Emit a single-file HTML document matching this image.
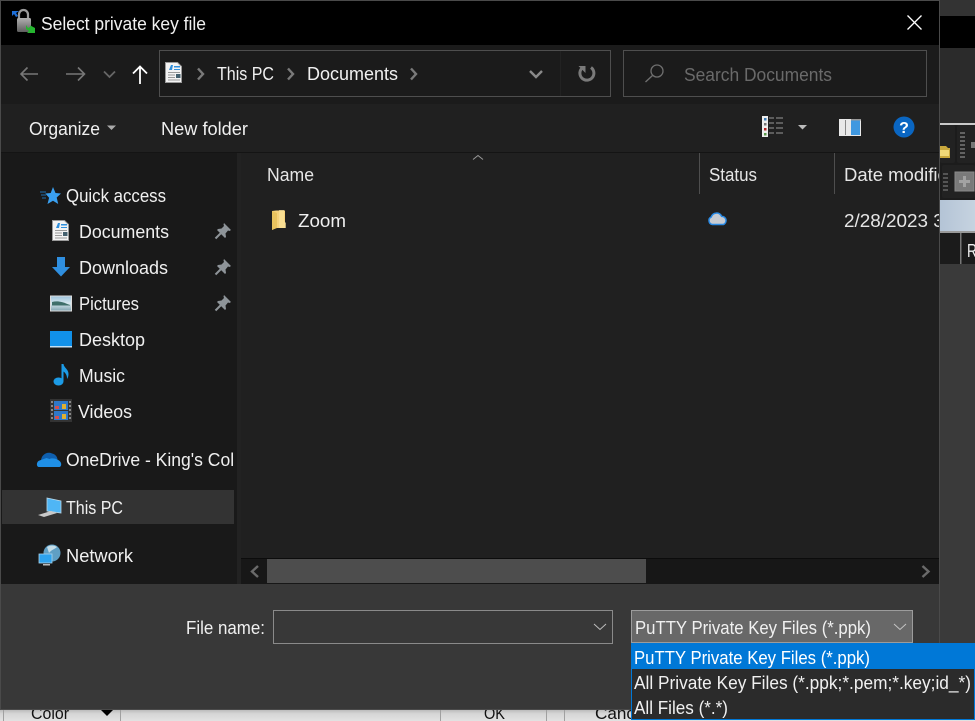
<!DOCTYPE html>
<html><head><meta charset="utf-8"><style>
html,body{margin:0;padding:0;background:#2b2b2b;width:975px;height:721px;overflow:hidden}
svg{display:block}
text{font-family:"Liberation Sans",sans-serif;font-size:18px;fill:#f0f0f0}
.d{fill:#e6e6e6}
</style></head><body>
<svg width="975" height="721" viewBox="0 0 975 721" xmlns="http://www.w3.org/2000/svg">
<defs>
<linearGradient id="bot" x1="0" y1="0" x2="0" y2="1"><stop offset="0" stop-color="#b5b5b5"/><stop offset=".4" stop-color="#d6d6d6"/><stop offset="1" stop-color="#e2e2e2"/></linearGradient>
<linearGradient id="blu" x1="0" y1="0" x2="1" y2="0"><stop offset="0" stop-color="#b4c4d6"/><stop offset="1" stop-color="#c6d3e0"/></linearGradient>
<linearGradient id="lock" x1="0" y1="0" x2="0" y2="1"><stop offset="0" stop-color="#b0b0b0"/><stop offset="1" stop-color="#5e5e5e"/></linearGradient>
<linearGradient id="sky" x1="0" y1="0" x2="0" y2="1"><stop offset="0" stop-color="#9cc2dc"/><stop offset=".5" stop-color="#d8e8ee"/><stop offset="1" stop-color="#7fa3b0"/></linearGradient>
<g id="pin"><path d="M1-8L8-1 6.500 0 5-.5 2.500 2.500 3 6 2 7-6-1-5-2-1.500-2.500 1-5 .5-6.500Z" fill="#8e9499"/><path d="M-2 2L-7.500 7.500" stroke="#8e9499" stroke-width="2"/></g>
<g id="doc"><path d="M0.500 .5H12.500L16.500 4.500V20.500H.5Z" fill="#f3f3f3" stroke="#9a9a9a"/><path d="M6 3l-2 5h3l1-5zM9 4h6v1.500H9zM9 7h6v1H9z" fill="#2f8fdc"/><path d="M3 10h12v1H3zM3 12.500h7v1H3zM3 15h7v1H3zM3 17.500h12v1H3z" fill="#9a9a9a"/><rect x="11" y="12" width="4.500" height="4" fill="#44606e"/></g>
</defs>

<!-- backdrop -->
<rect width="975" height="721" fill="#2b2b2b"/>
<rect x="940" y="16" width="35" height="32" fill="#000"/>
<rect x="940" y="0" width="35" height="16" fill="#333"/>
<rect x="940" y="123" width="35" height="2" fill="#c9c9c9"/>
<rect x="940" y="125" width="35" height="75" fill="#1c1c1c"/>
<rect x="940" y="125" width="15" height="38" rx="2" fill="#222"/>
<rect x="957" y="125" width="18" height="38" rx="2" fill="#222"/>
<rect x="942" y="165" width="33" height="33" rx="2" fill="#222"/>
<path d="M940 146h6l2 2h2v10h-10z" fill="#c9a83d"/><rect x="940" y="150" width="9" height="6" fill="#f0d878"/>
<path d="M960 133h5M960 137h5M960 141h5M960 145h5M960 149h5M960 153h5M960 157h5" stroke="#777" stroke-width="1.500"/>
<rect x="971" y="142" width="4" height="6" fill="#777"/>
<path d="M943 174h5M943 178h5M943 182h5M943 186h5M943 190h5" stroke="#666" stroke-width="1.500"/>
<rect x="955" y="172" width="19" height="19" fill="#7a7a7a" stroke="#8a8a8a"/>
<path d="M959 181.500h11M964.500 176v11" stroke="#a2a2a2" stroke-width="3"/>
<rect x="940" y="200" width="35" height="32" fill="url(#blu)"/>
<rect x="940" y="231" width="35" height="2" fill="#9a9a9a"/>
<rect x="940" y="233" width="35" height="31" fill="#1b1b1b"/>
<rect x="960" y="233" width="1.500" height="31" fill="#777"/>
<text x="967" y="257" textLength="10" lengthAdjust="spacingAndGlyphs">R</text>
<rect x="940" y="264" width="35" height="460" fill="#3a3a3a"/>

<!-- bottom strip behind dialog -->
<rect x="0" y="709" width="975" height="12" fill="url(#bot)"/>
<path d="M3.500 709v12M120.500 709v12M440.500 709v12M546.500 709v12M564.500 709v12" stroke="#a0a0a0" fill="none"/>
<text x="31" y="719" textLength="38" lengthAdjust="spacingAndGlyphs" style="fill:#111;font-size:17px">Color</text>
<path d="M101 710h12l-6 6z" fill="#000"/>
<text x="484" y="719" textLength="21" lengthAdjust="spacingAndGlyphs" style="fill:#111;font-size:17px">OK</text>
<text x="595" y="719" textLength="40" lengthAdjust="spacingAndGlyphs" style="fill:#111;font-size:17px">Canc</text>

<!-- dialog -->
<rect x="0" y="0" width="940" height="710" fill="#4a4a4a"/>
<rect x="1" y="1" width="938" height="44" fill="#000"/>
<rect x="1" y="45" width="938" height="59" fill="#1b1b1b"/>
<rect x="1" y="104" width="938" height="48" fill="#202020"/>
<rect x="1" y="152" width="938" height="1" fill="#141414"/>
<rect x="1" y="153" width="236" height="431" fill="#191919"/>
<rect x="237" y="153" width="4" height="431" fill="#222"/>
<rect x="241" y="153" width="698" height="431" fill="#202020"/>
<rect x="1" y="584" width="938" height="125" fill="#383838"/>

<!-- title bar -->
<path d="M19 18v-3.500a4.500 4.500 0 0 1 9 0V18" fill="none" stroke="#9a9a9a" stroke-width="2.200"/>
<rect x="17" y="18" width="14" height="14" rx="1.500" fill="url(#lock)"/>
<path d="M12 11h7l-3 2 2 3-2 1-2-3-2 2z" fill="#1e6fd8"/>
<path d="M26 25l2 3 2-1 .5-1.500L35 28v5h-8l2-2-3-2z" fill="#25b52f"/>
<text x="41" y="30" textLength="165" lengthAdjust="spacingAndGlyphs">Select private key file</text>
<path d="M907.500 15.500l14 14M921.500 15.500l-14 14" stroke="#fff" stroke-width="1.300"/>

<!-- nav -->
<path d="M21 74h17M27.500 67.500L21 74l6.500 6.500" fill="none" stroke="#777" stroke-width="1.600"/>
<path d="M66 74h18M78 67.500L84.500 74 78 80.500" fill="none" stroke="#777" stroke-width="1.600"/>
<path d="M104 71.500l5.500 5.500 5.500-5.500" fill="none" stroke="#666" stroke-width="1.800"/>
<path d="M140 84V67M133 73.500l7-7 7 7" fill="none" stroke="#fff" stroke-width="1.800"/>
<rect x="159.500" y="50.500" width="451" height="46" fill="none" stroke="#4e4e4e"/>
<use href="#doc" transform="translate(165,62)"/>
<path d="M198 68.500l5 5.500-5 5.500" fill="none" stroke="#7a7a7a" stroke-width="2.400"/>
<text x="217" y="80" textLength="57" lengthAdjust="spacingAndGlyphs">This PC</text>
<path d="M288 68.500l5 5.500-5 5.500" fill="none" stroke="#7a7a7a" stroke-width="2.400"/>
<text x="307" y="80" textLength="91" lengthAdjust="spacingAndGlyphs">Documents</text>
<path d="M411 68.500l5 5.500-5 5.500" fill="none" stroke="#7a7a7a" stroke-width="2.400"/>
<path d="M530 71l6 6 6-6" fill="none" stroke="#8a8a8a" stroke-width="2.400"/>
<rect x="560" y="51" width="1" height="45" fill="#222"/>
<path d="M591 67.500a7 7 0 1 1-9.500 1.200" fill="none" stroke="#7a7a7a" stroke-width="3"/>
<path d="M578.500 66h7v7z" fill="#7a7a7a"/>
<rect x="623.500" y="50.500" width="303" height="46" fill="none" stroke="#4e4e4e"/>
<circle cx="657" cy="71" r="6" fill="none" stroke="#6f6f6f" stroke-width="1.300"/>
<path d="M652.500 75.500l-7 6.500" stroke="#6f6f6f" stroke-width="1.400"/>
<text x="684" y="81" textLength="148" lengthAdjust="spacingAndGlyphs" style="fill:#6a6a6a">Search Documents</text>

<!-- toolbar -->
<text x="29" y="135" textLength="71" lengthAdjust="spacingAndGlyphs">Organize</text>
<path d="M107 125.500h9l-4.500 4.500z" fill="#aaa"/>
<text x="161" y="135" textLength="87" lengthAdjust="spacingAndGlyphs">New folder</text>
<rect x="762" y="116" width="6" height="21" fill="#eee"/>
<rect x="764" y="118" width="2.500" height="2.500" fill="#3a7ab5"/><rect x="764" y="123" width="2.500" height="2.500" fill="#777"/><rect x="764" y="128" width="2.500" height="2.500" fill="#b02020"/><rect x="764" y="133" width="2.500" height="2.500" fill="#5a9a4a"/>
<path d="M769 118h5M776 118h7M769 123h5M776 123h7M769 128h5M776 128h7M769 133h5M776 133h7" stroke="#999"/>
<path d="M798 125h9l-4.500 4.500z" fill="#bbb"/>
<rect x="839" y="119" width="22" height="17" fill="#e8e8e8"/>
<rect x="845" y="120" width="1" height="15" fill="#888"/><rect x="851" y="120" width="9" height="15" fill="#3f98e0"/><rect x="851" y="119" width="10" height="1.500" fill="#999"/>
<circle cx="904" cy="127" r="10.500" fill="#0a66c2"/>
<text x="904" y="133" text-anchor="middle" style="font-size:16px;font-weight:bold;fill:#fff">?</text>

<!-- list header -->
<path d="M473 159.500l5-4 5 4" fill="none" stroke="#9a9a9a"/>
<text x="267" y="181" textLength="47" lengthAdjust="spacingAndGlyphs" class="d">Name</text>
<rect x="699" y="153" width="1" height="41" fill="#4e4e4e"/>
<rect x="834" y="153" width="1" height="41" fill="#4e4e4e"/>
<text x="709" y="181" textLength="48" lengthAdjust="spacingAndGlyphs" class="d">Status</text>
<svg x="844" y="150" width="95" height="100"><text x="0" y="31" textLength="114" lengthAdjust="spacingAndGlyphs" class="d">Date modified</text><text x="0" y="77" textLength="105" lengthAdjust="spacingAndGlyphs" class="d">2/28/2023 3:</text></svg>

<!-- row -->
<path d="M272 211l4-.5h9v17.500h-9l-4 2z" fill="#f6d27a"/>
<path d="M272 211l5 2v15l-5 2z" fill="#e9c35e"/>
<path d="M279 210h5v11l2 2v5h-7z" fill="#fbe29b" opacity=".7"/>
<text x="298" y="227" textLength="48" lengthAdjust="spacingAndGlyphs">Zoom</text>
<path d="M712.500 224.500a4 4 0 0 1-1.200-7.600 5.500 5.500 0 0 1 10.300-.5 4.200 4.200 0 0 1 1.800 8.100z" fill="#c8ccd2" stroke="#2a8be6" stroke-width="1.500"/>

<!-- sidebar -->
<path d="M53 187l2.500 6 5.500.5-4.300 4 1.500 6.500-5.200-3.200-5.500 3.200 1.600-6.300-3.800-4.200 5.400-.5z" fill="#3aa0f0"/>
<path d="M40 192h6M41 195h5M42 198h4" stroke="#1f6fb0" stroke-width="1"/>
<text x="66" y="202" textLength="100" lengthAdjust="spacingAndGlyphs">Quick access</text>
<use href="#doc" transform="translate(52,220)"/>
<text x="79" y="238" textLength="90" lengthAdjust="spacingAndGlyphs">Documents</text>
<use href="#pin" transform="translate(223,231)"/>
<path d="M57 257h8v10h5l-9 9.500-9-9.500h5z" fill="#2f8fe0"/>
<text x="79" y="274" textLength="89" lengthAdjust="spacingAndGlyphs">Downloads</text>
<use href="#pin" transform="translate(223,267)"/>
<rect x="50.500" y="296" width="21" height="15" fill="url(#sky)" stroke="#dcdcdc"/>
<path d="M52 302c5-1.500 10-.5 18 3v.5H52z" fill="#3f6f6a"/>
<text x="79" y="310" textLength="60" lengthAdjust="spacingAndGlyphs">Pictures</text>
<use href="#pin" transform="translate(223,303)"/>
<rect x="50" y="331" width="22" height="16" fill="#1191ea"/>
<rect x="50" y="346" width="22" height="1.500" fill="#bfe0f6"/>
<text x="79" y="346" textLength="66" lengthAdjust="spacingAndGlyphs">Desktop</text>
<ellipse cx="58.500" cy="381.500" rx="5" ry="4" fill="#1c9be6"/>
<path d="M61.500 381v-17h2c.5 4 5 5 5 10 0 2-.5 3.500-1.500 5 .3-4-2-6.500-3.500-7.500v9.500z" fill="#1c9be6"/>
<text x="79" y="382" textLength="46" lengthAdjust="spacingAndGlyphs">Music</text>
<rect x="50" y="399" width="22" height="23" fill="#333"/>
<rect x="54" y="401" width="14" height="9" fill="#2e78c8"/><rect x="54" y="411" width="14" height="9" fill="#2e78c8"/>
<rect x="55" y="406" width="4" height="3" fill="#d05050"/><rect x="62" y="404" width="4" height="5" fill="#e0b030"/><rect x="55" y="416" width="4" height="3" fill="#d05050"/><rect x="62" y="414" width="4" height="5" fill="#e0b030"/>
<path d="M52 401v20M70 401v20" stroke="#888" stroke-width="2" stroke-dasharray="2 2"/>
<text x="78" y="418" textLength="54" lengthAdjust="spacingAndGlyphs">Videos</text>

<path d="M41 461c0-6 6-10 11-7.500 3 .5 5 3 5.500 5.500l-9 3z" fill="#0f5fae"/>
<path d="M38.500 467c-2.500-1-2-5.500 1-6.500l7-2.500 3 1c3-1.500 10 0 11.500 4 .5 2 0 3.500-1.500 4z" fill="#1f8fe6"/>
<svg x="60" y="445" width="175" height="35"><text x="6" y="21" textLength="172" lengthAdjust="spacingAndGlyphs">OneDrive - King's Coll</text></svg>

<rect x="2" y="490" width="232" height="34" fill="#333"/>
<path d="M47 498l14 3v12l-14-2z" fill="#4fb6f5" stroke="#b8d8ea" stroke-width=".8"/>
<path d="M38 515l13-4 6 2-13 4z" fill="#c8c8c8"/>
<text x="66" y="514" textLength="57" lengthAdjust="spacingAndGlyphs">This PC</text>
<circle cx="52" cy="553" r="8.500" fill="#5f9fc4"/><path d="M47 547c3-2 7-2 10 0-2 2-6 3-8 6z" fill="#c5dde8"/>
<rect x="39" y="554" width="13" height="9" fill="#2ea3ee" stroke="#a8d4ee" stroke-width=".8"/>
<rect x="43" y="564" width="7" height="1.500" fill="#bbb"/>
<text x="66" y="562" textLength="67" lengthAdjust="spacingAndGlyphs">Network</text>

<!-- scrollbar -->
<rect x="241" y="558" width="698" height="26" fill="#171717"/>
<rect x="241" y="558" width="698" height="1" fill="#0c0c0c"/>
<rect x="267" y="559" width="379" height="24" fill="#4d4d4d"/>
<path d="M258 566l-6 5.500 6 5.500" fill="none" stroke="#6a6a6a" stroke-width="2.400"/>
<path d="M922.500 566l6 5.500-6 5.500" fill="none" stroke="#6a6a6a" stroke-width="2.400"/>

<!-- bottom controls -->
<text x="186" y="634" textLength="79" lengthAdjust="spacingAndGlyphs">File name:</text>
<rect x="273.500" y="610.500" width="339" height="33" fill="#383838" stroke="#8a8a8a"/>
<path d="M594 624l6 5.500 6-5.500" fill="none" stroke="#bdbdbd" stroke-width="1"/>
<rect x="631.500" y="610.500" width="281" height="32" fill="#686868" stroke="#9c9c9c"/>
<text x="635" y="634" textLength="236" lengthAdjust="spacingAndGlyphs">PuTTY Private Key Files (*.ppk)</text>
<path d="M894 624l6 5.500 6-5.500" fill="none" stroke="#c4c4c4" stroke-width="1"/>

<!-- dropdown -->
<rect x="631.500" y="643.500" width="343" height="76" fill="#2b2b2b" stroke="#0078d7"/>
<rect x="632" y="644" width="342" height="25" fill="#0078d7"/>
<text x="634" y="664" textLength="236" lengthAdjust="spacingAndGlyphs" style="fill:#fff">PuTTY Private Key Files (*.ppk)</text>
<text x="634" y="689" textLength="337" lengthAdjust="spacingAndGlyphs">All Private Key Files (*.ppk;*.pem;*.key;id_*)</text>
<text x="634" y="714" textLength="94" lengthAdjust="spacingAndGlyphs">All Files (*.*)</text>
</svg>
</body></html>
